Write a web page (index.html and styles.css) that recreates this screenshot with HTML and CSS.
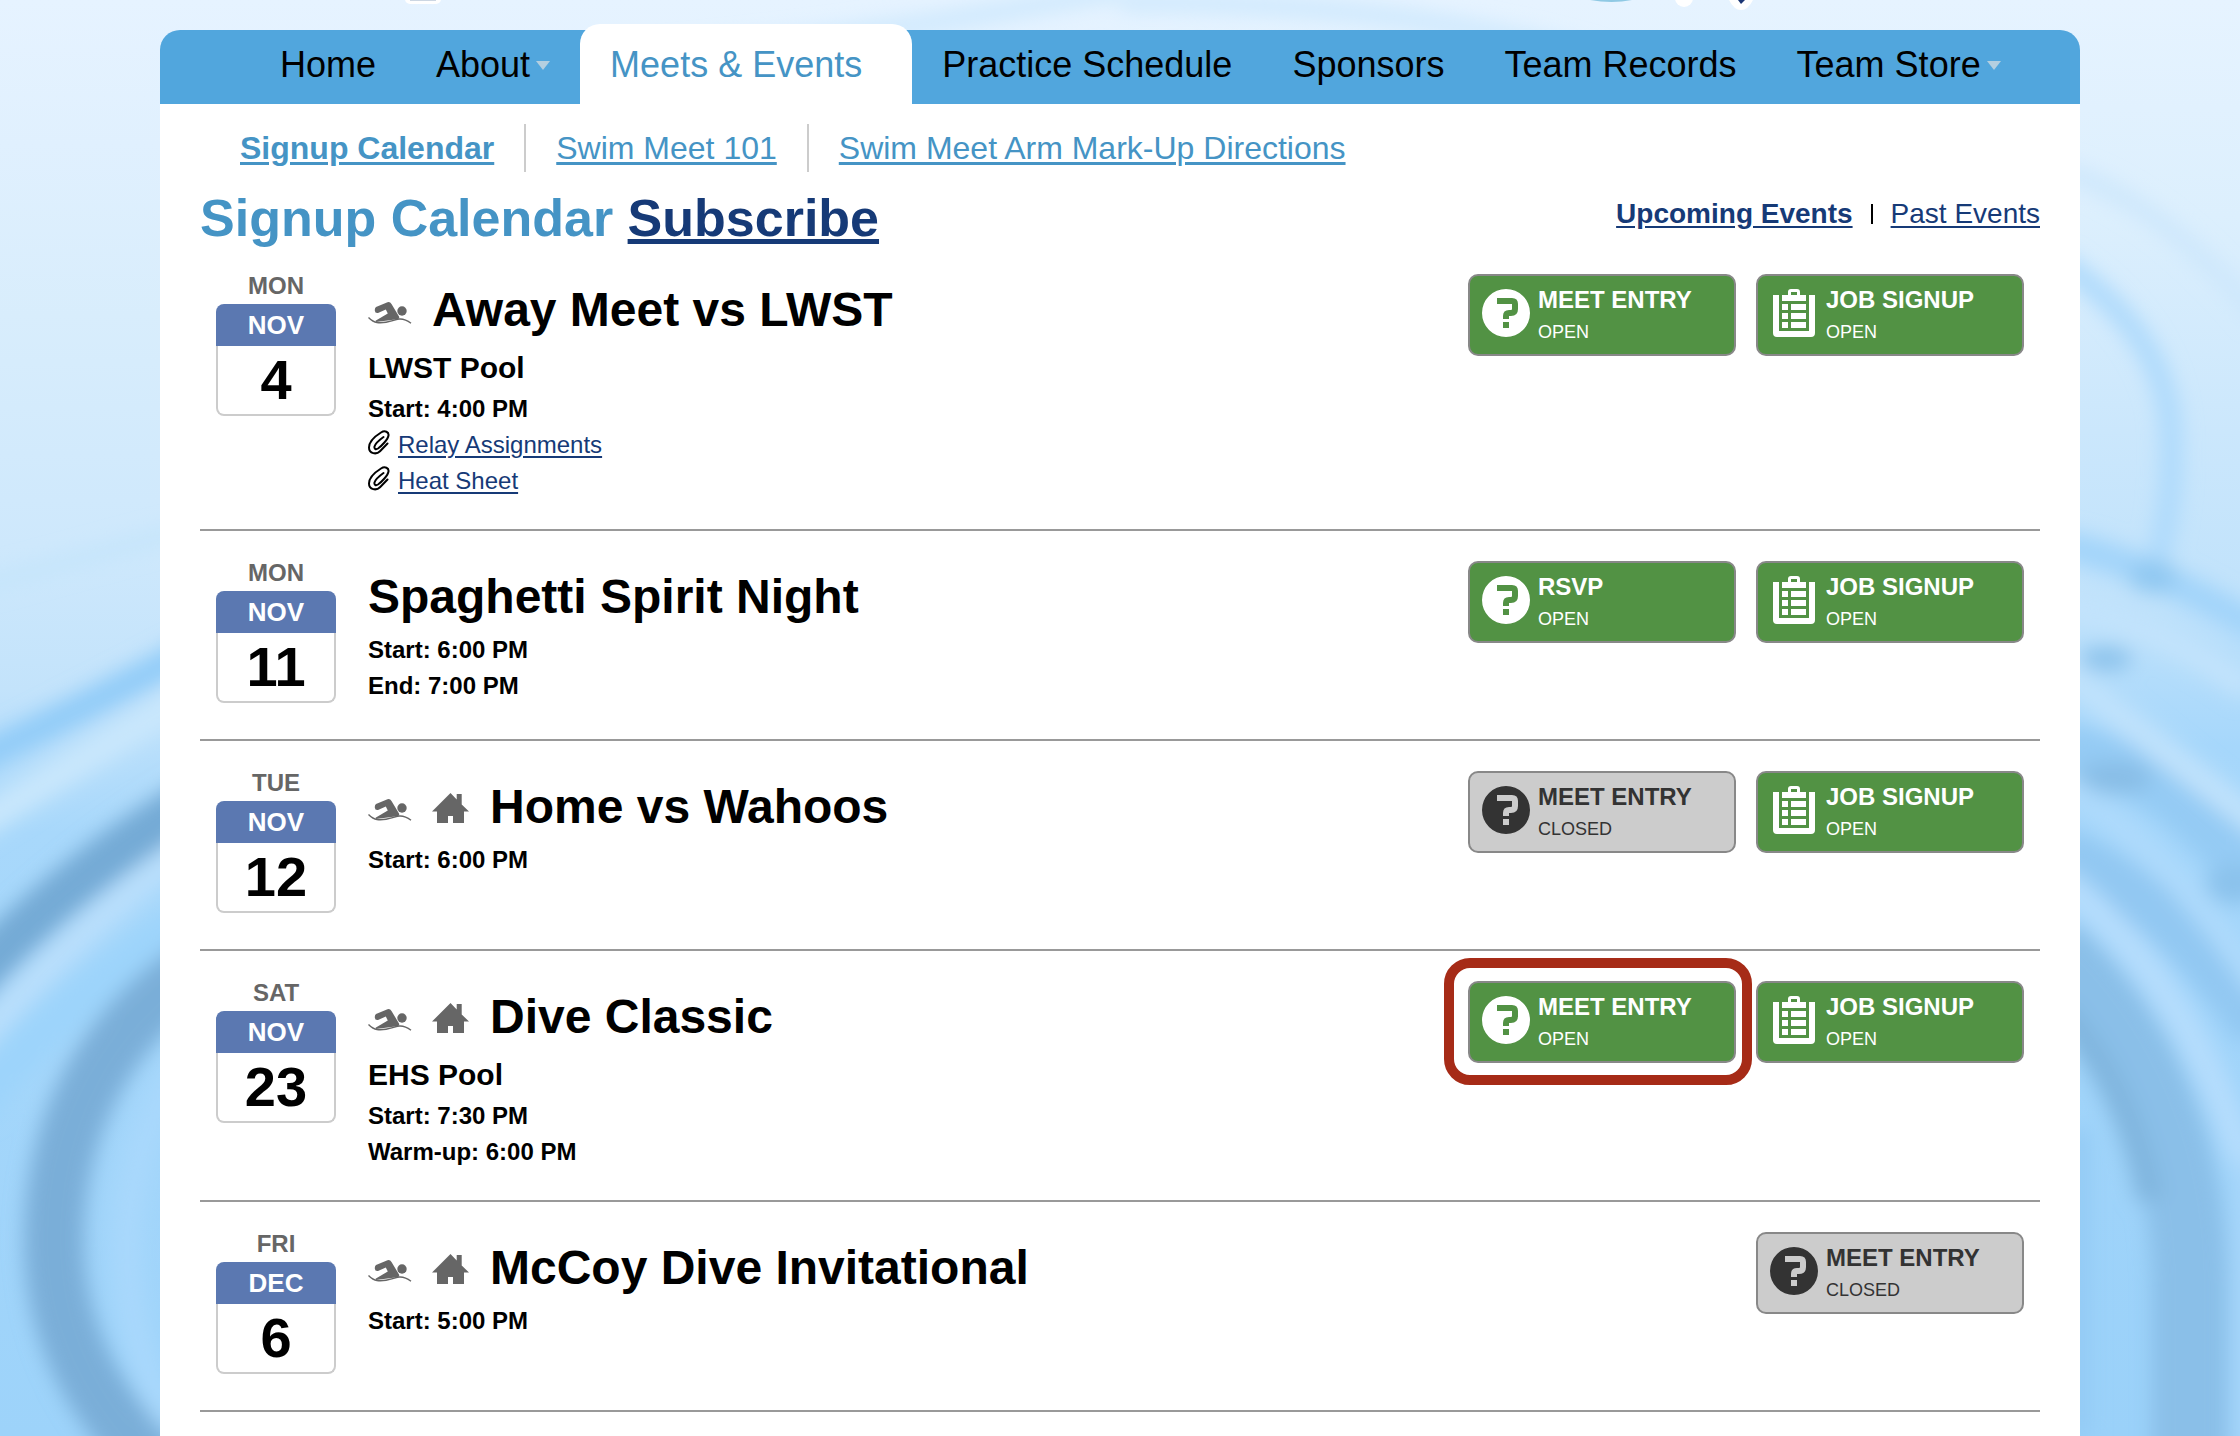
FILE: index.html
```html
<!DOCTYPE html>
<html lang="en">
<head>
  <meta charset="UTF-8" />
  <meta name="viewport" content="width=device-width, initial-scale=1.0" />
  <title>Signup Calendar</title>
  <link rel="stylesheet" href="styles.css">
</head>
<body>

  <!-- water ripple background -->
  <svg class="water" viewBox="0 0 2240 1436" preserveAspectRatio="none" aria-hidden="true">
    <defs>
      <linearGradient id="waterLeft" x1="0" y1="0" x2="0" y2="1">
        <stop offset="0" stop-color="#e6f3ff"/>
        <stop offset="0.1" stop-color="#e0f0fe"/>
        <stop offset="0.22" stop-color="#d8edfc"/>
        <stop offset="0.38" stop-color="#cee8fc"/>
        <stop offset="0.48" stop-color="#c3e3fb"/>
        <stop offset="0.58" stop-color="#a8d8fb"/>
        <stop offset="1" stop-color="#9dd3fa"/>
      </linearGradient>
      <linearGradient id="waterRight" x1="0" y1="0" x2="0" y2="1">
        <stop offset="0" stop-color="#e6f3ff"/>
        <stop offset="0.15" stop-color="#dceffd"/>
        <stop offset="0.3" stop-color="#cbe7fc"/>
        <stop offset="0.42" stop-color="#c0e2fb"/>
        <stop offset="0.52" stop-color="#a6d7fb"/>
        <stop offset="1" stop-color="#9ad1f9"/>
      </linearGradient>
      <filter id="soft" x="-20%" y="-20%" width="140%" height="140%">
        <feGaussianBlur stdDeviation="10"/>
      </filter>
    </defs>
    <rect width="1120" height="1436" fill="url(#waterLeft)"/>
    <rect x="1120" width="1120" height="1436" fill="url(#waterRight)"/>
    <g filter="url(#soft)" fill="none">
      <path d="M620 60 Q860 40 1120 -10" stroke="#cde8fd" stroke-width="18"/>
      <path d="M1120 2 Q1400 0 1600 60" stroke="#cde8fd" stroke-width="18"/>
      <path d="M-20 586 L180 532" stroke="#c5e5fb" stroke-width="16"/>
      <path d="M-40 768 Q80 710 200 646" stroke="#92ccf8" stroke-width="30"/>
      <path d="M-40 836 Q80 760 200 690" stroke="#c9e7fc" stroke-width="30"/>
      <path d="M-40 994 Q60 880 200 796" stroke="#74aad5" stroke-width="46"/>
      <path d="M-40 1062 Q60 940 200 838" stroke="#badffc" stroke-width="28"/>
      <path d="M-30 1110 Q40 1020 180 926" stroke="#9dd4fb" stroke-width="44"/>
      <path d="M200 966 C110 1024 54 1120 54 1240 C54 1330 90 1400 160 1470" stroke="#7aaed8" stroke-width="60"/>
      <path d="M190 1060 C110 1150 110 1320 170 1420" stroke="#a9d8fc" stroke-width="28"/>
      <path d="M2060 170 Q2160 200 2260 320" stroke="#cde7fc" stroke-width="18"/>
      <path d="M2060 262 Q2160 330 2170 420 Q2176 500 2155 570" stroke="#aedafc" stroke-width="22"/>
      <path d="M2060 545 Q2140 560 2260 630" stroke="#a2d4fa" stroke-width="30"/>
      <path d="M2060 606 Q2150 620 2250 690" stroke="#c2e3fc" stroke-width="26"/>
      <ellipse cx="2153" cy="577" rx="24" ry="16" fill="#90c8f1"/>
      <ellipse cx="2106" cy="659" rx="26" ry="12" fill="#8cc2eb"/>
      <path d="M2060 750 Q2160 760 2260 890" stroke="#94cbf4" stroke-width="50"/>
      <path d="M2060 668 Q2150 740 2260 826" stroke="#c0e2fc" stroke-width="28"/>
      <ellipse cx="2114" cy="778" rx="38" ry="16" fill="#88bde6"/>
      <path d="M2060 852 Q2160 890 2260 1030" stroke="#92c8f2" stroke-width="50"/>
      <ellipse cx="2234" cy="884" rx="28" ry="20" fill="#8bc2ec"/>
      <path d="M2060 784 Q2170 850 2260 990" stroke="#aedafc" stroke-width="26"/>
      <path d="M2050 950 Q2186 1080 2190 1280 L2190 1460" stroke="#8abfe8" stroke-width="76"/>
      <path d="M2060 1010 Q2130 1090 2150 1200" stroke="#80b5de" stroke-width="26"/>
      <path d="M2060 880 Q2190 980 2250 1180" stroke="#b5ddfd" stroke-width="30"/>
      <path d="M2244 1160 V1450" stroke="#a8d7fb" stroke-width="20"/>
      <path d="M2078 1130 V1436" stroke="#93caf4" stroke-width="24"/>
    </g>
    <!-- bottom edge of the team banner -->
    <g>
      <rect x="405" y="-10" width="36" height="14" rx="5" fill="#fff"/>
      <rect x="410" y="-10" width="26" height="11" fill="#ccd6e2"/>
      <path d="M1590 0 H1632 Q1612 4 1590 0 Z" fill="#8fc9e4"/>
      <ellipse cx="1684" cy="-2" rx="9" ry="9" fill="#fff"/>
      <path d="M1729 0 Q1734 10 1741 10 Q1748 10 1753 0 Z" fill="#fff"/>
      <path d="M1738 0 L1741 4 L1745 0 Z" fill="#1b3675"/>
    </g>
  </svg>

  <!-- icons -->
  <svg class="sprite" aria-hidden="true">
    <symbol id="swimmer" viewBox="0 0 44 22">
      <path d="M8 5 L19.500 .3 Q22 -.5 23.500 2 L31 14.500 Q32 17 29 17.300 L8 20 L7.500 18.800 L19.800 11.500 L17.800 7.500 L10 11 Q7 11.500 6.800 8.500 Q6.600 6 8 5 Z"/>
      <circle cx="34" cy="9" r="4.700"/>
      <path d="M.5 15.500 Q5 20 9 20.500 C18 22 25 17.800 31 17 Q37 16.500 43 21.300" fill="none" stroke="currentColor" stroke-width="1.400"/>
    </symbol>
    <symbol id="house" viewBox="0 0 38 30">
      <path d="M18.500 0 L24.700 6.500 V1 H29.700 V11.500 L37 18.500 H32 V30 H21 V23 H16 V30 H5 V18.500 H0 Z"/>
    </symbol>
    <symbol id="clip" viewBox="0 0 22 25">
      <path d="M19.500 13.500 L12 21.200 C8.500 24.800 1 24 1 17.500 C1 11 9 5 13 2.500 C17 0 21 2 20.500 5.500 C20 9.500 13 16.500 10 18.500 C7.500 20 6 18.500 6.500 16.500 C7.500 13 12 9.500 15.500 7" fill="none" stroke="currentColor" stroke-width="2" stroke-linecap="round"/>
    </symbol>
    <symbol id="question" viewBox="0 0 48 48">
      <path fill-rule="evenodd" d="M24 0 A24 24 0 0 1 24 48 A24 24 0 0 1 24 0 Z M15 9 V15 H30 V20 Q30 21 29 21 H27 Q21 21 21 27 V30 H27 V27 H29 Q36 27 36 20 V15 Q36 9 30 9 Z M21 33 V39 H27 V33 Z"/>
    </symbol>
    <symbol id="clipboard" viewBox="0 0 48 48">
      <path d="M3 6 H9 V42 H39 V6 H45 V44 Q45 48 41 48 H7 Q3 48 3 44 Z"/>
      <path d="M12 6 H18 V3 Q18 0 21 0 H27 Q30 0 30 3 V6 H36 V12 H12 Z M21 3 V6 H27 V3 Z" fill-rule="evenodd"/>
      <path d="M12 15 H18 V21 H12 Z M21 15 H36 V21 H21 Z M12 24 H18 V30 H12 Z M21 24 H36 V30 H21 Z M12 33 H18 V39 H12 Z M21 33 H36 V39 H21 Z"/>
    </symbol>
  </svg>

  <div class="page">
    <nav class="main-nav">
      <a href="#">Home</a>
      <a href="#">About<span class="arrow"></span></a>
      <a href="#" class="active">Meets &amp; Events<span class="arrow"></span></a>
      <a href="#">Practice Schedule</a>
      <a href="#">Sponsors</a>
      <a href="#">Team Records</a>
      <a href="#">Team Store<span class="arrow"></span></a>
    </nav>

    <main class="content">
      <nav class="sub-nav">
        <a href="#" class="current">Signup Calendar</a>
        <a href="#">Swim Meet 101</a>
        <a href="#">Swim Meet Arm Mark-Up Directions</a>
      </nav>

      <header class="page-header">
        <h1>Signup Calendar <a href="#">Subscribe</a></h1>
        <div class="filter">
          <a href="#" class="current">Upcoming Events</a>
          <span class="divider"></span>
          <a href="#">Past Events</a>
        </div>
      </header>

      <article class="event">
        <div class="date">
          <div class="weekday">MON</div>
          <div class="month">NOV</div>
          <div class="day">4</div>
        </div>
        <div class="details">
          <h2><svg class="swimmer"><use href="#swimmer"/></svg>Away Meet vs LWST</h2>
          <p class="location">LWST Pool</p>
          <p class="time">Start: 4:00 PM</p>
          <p class="file"><svg><use href="#clip"/></svg><a href="#">Relay Assignments</a></p>
          <p class="file"><svg><use href="#clip"/></svg><a href="#">Heat Sheet</a></p>
        </div>
        <div class="actions">
          <button class="open"><svg><use href="#question"/></svg><span class="label"><b>MEET ENTRY</b><small>OPEN</small></span></button>
          <button class="open"><svg><use href="#clipboard"/></svg><span class="label"><b>JOB SIGNUP</b><small>OPEN</small></span></button>
        </div>
      </article>

      <article class="event">
        <div class="date">
          <div class="weekday">MON</div>
          <div class="month">NOV</div>
          <div class="day">11</div>
        </div>
        <div class="details">
          <h2>Spaghetti Spirit Night</h2>
          <p class="time">Start: 6:00 PM</p>
          <p class="time">End: 7:00 PM</p>
        </div>
        <div class="actions">
          <button class="open"><svg><use href="#question"/></svg><span class="label"><b>RSVP</b><small>OPEN</small></span></button>
          <button class="open"><svg><use href="#clipboard"/></svg><span class="label"><b>JOB SIGNUP</b><small>OPEN</small></span></button>
        </div>
      </article>

      <article class="event">
        <div class="date">
          <div class="weekday">TUE</div>
          <div class="month">NOV</div>
          <div class="day">12</div>
        </div>
        <div class="details">
          <h2><svg class="swimmer"><use href="#swimmer"/></svg><svg class="house"><use href="#house"/></svg>Home vs Wahoos</h2>
          <p class="time">Start: 6:00 PM</p>
        </div>
        <div class="actions">
          <button class="closed"><svg><use href="#question"/></svg><span class="label"><b>MEET ENTRY</b><small>CLOSED</small></span></button>
          <button class="open"><svg><use href="#clipboard"/></svg><span class="label"><b>JOB SIGNUP</b><small>OPEN</small></span></button>
        </div>
      </article>

      <article class="event">
        <div class="date">
          <div class="weekday">SAT</div>
          <div class="month">NOV</div>
          <div class="day">23</div>
        </div>
        <div class="details">
          <h2><svg class="swimmer"><use href="#swimmer"/></svg><svg class="house"><use href="#house"/></svg>Dive Classic</h2>
          <p class="location">EHS Pool</p>
          <p class="time">Start: 7:30 PM</p>
          <p class="time">Warm-up: 6:00 PM</p>
        </div>
        <div class="actions">
          <button class="open highlight"><svg><use href="#question"/></svg><span class="label"><b>MEET ENTRY</b><small>OPEN</small></span></button>
          <button class="open"><svg><use href="#clipboard"/></svg><span class="label"><b>JOB SIGNUP</b><small>OPEN</small></span></button>
        </div>
      </article>

      <article class="event">
        <div class="date">
          <div class="weekday">FRI</div>
          <div class="month">DEC</div>
          <div class="day">6</div>
        </div>
        <div class="details">
          <h2><svg class="swimmer"><use href="#swimmer"/></svg><svg class="house"><use href="#house"/></svg>McCoy Dive Invitational</h2>
          <p class="time">Start: 5:00 PM</p>
        </div>
        <div class="actions">
          <button class="closed"><svg><use href="#question"/></svg><span class="label"><b>MEET ENTRY</b><small>CLOSED</small></span></button>
        </div>
      </article>
    </main>
  </div>

</body>
</html>
```

FILE: styles.css
```css
* {
  box-sizing: border-box;
}

body {
  margin: 0;
  font-family: "Liberation Sans", Helvetica, Arial, sans-serif;
  font-size: 24px;
  color: #000;
  background: #b9dffb;
}

h1, h2, p {
  margin: 0;
}

a {
  color: #163a77;
  text-underline-offset: 3px;
}

.water {
  position: fixed;
  inset: 0;
  width: 100%;
  height: 100%;
  z-index: -1;
}

.sprite {
  display: none;
}

.page {
  display: flex;
  flex-direction: column;
  min-height: 100vh;
  padding: 30px 160px 0;
}

/* top navigation */
.main-nav {
  display: flex;
  padding-left: 90px;
  background: #51a6dd;
  border-radius: 20px 20px 0 0;
}

.main-nav a {
  padding: 0 30px 4px;
  font-size: 36px;
  line-height: 70px;
  color: #000;
  text-decoration: none;
  white-space: nowrap;
}

.main-nav a.active {
  margin-top: -6px;
  padding-top: 6px;
  background: #fff;
  color: #4594c5;
  border-radius: 20px 20px 0 0;
}

.arrow {
  display: inline-block;
  margin-left: 6px;
  border: 7px solid transparent;
  border-top: 9px solid #b4cfe0;
  border-bottom: 0;
  vertical-align: 7px;
}

.active .arrow {
  visibility: hidden;
}

.content {
  flex: 1;
  padding: 20px 40px 0;
  background: #fff;
}

.sub-nav {
  display: flex;
  padding-left: 10px;
}

.sub-nav a {
  padding: 0 30px;
  font-size: 32px;
  line-height: 48px;
  color: #4594c5;
}

.sub-nav a + a {
  border-left: 2px solid #ccc;
}

.current {
  font-weight: bold;
}

.page-header {
  display: flex;
  justify-content: space-between;
  align-items: flex-start;
  padding-top: 20px;
}

h1 {
  font-size: 52px;
  line-height: 52px;
  color: #4594c5;
}

h1 a {
  text-decoration-thickness: 5px;
}

.filter {
  display: flex;
  align-items: center;
  gap: 18px;
  font-size: 28px;
  line-height: 44px;
}

.divider {
  width: 2px;
  height: 20px;
  background: #000;
}

/* event rows */
.event {
  display: flex;
  padding: 30px 16px;
  border-bottom: 2px solid #999;
}

.date {
  width: 120px;
  margin: 0 32px 6px 0;
  font-weight: bold;
  text-align: center;
}

.weekday {
  padding-bottom: 6px;
  line-height: 24px;
  color: #666;
}

.month {
  font-size: 26px;
  line-height: 42px;
  color: #fff;
  background: #5b78b1;
  border-radius: 8px 8px 0 0;
}

.day {
  height: 70px;
  font-size: 56px;
  line-height: 68px;
  border: 2px solid #ccc;
  border-top: 0;
  border-radius: 0 0 8px 8px;
}

.details {
  flex: 1;
}

.details h2 {
  font-size: 48px;
  line-height: 71px;
}

.details h2 svg {
  margin-right: 20px;
  color: #666;
  fill: #666;
}

.swimmer {
  width: 44px;
  height: 22px;
  vertical-align: 2px;
}

.house {
  width: 38px;
  height: 30px;
  vertical-align: baseline;
}

.location {
  font-size: 30px;
  font-weight: bold;
  line-height: 46px;
}

.time {
  font-weight: bold;
  line-height: 36px;
}

.file {
  display: flex;
  gap: 8px;
  line-height: 36px;
}

.file svg {
  width: 22px;
  height: 25px;
  margin-top: 3px;
}

.actions {
  display: flex;
  align-items: flex-start;
  gap: 20px;
}

button {
  position: relative;
  display: flex;
  align-items: flex-start;
  gap: 8px;
  width: 268px;
  padding: 8px 12px 6px;
  font-family: inherit;
  text-align: left;
  border: 2px solid #888;
  border-radius: 10px;
  cursor: pointer;
}

button svg {
  width: 48px;
  height: 48px;
  margin-top: 5px;
  fill: currentColor;
}

.label {
  display: flex;
  flex-direction: column;
  line-height: 32px;
}

.label b {
  font-size: 24px;
}

.label small {
  font-size: 18px;
}

.open {
  color: #fff;
  background: #529244;
}

.closed {
  color: #333;
  background: #ccc;
}

/* red frame around the button */
.highlight::after {
  content: "";
  position: absolute;
  inset: -25px -18px -24px -26px;
  border: 10px solid #a62b17;
  border-radius: 26px;
}
```
